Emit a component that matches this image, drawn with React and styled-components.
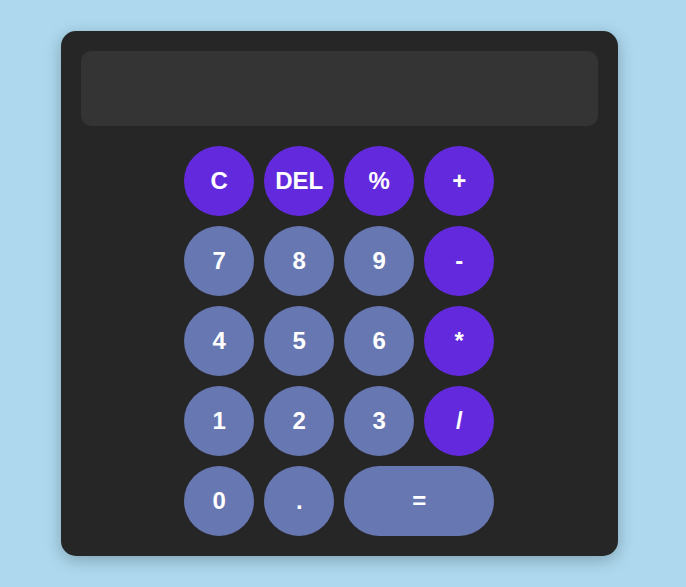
import React from 'react';
import styled, { createGlobalStyle } from 'styled-components';

const GlobalStyle = createGlobalStyle`
  html, body {
    margin: 0;
    padding: 0;
  }
  body {
    background: #add8ee;
    font-family: "Liberation Sans", Arial, sans-serif;
    min-height: 100vh;
  }
`;

const Page = styled.div`
  display: flex;
  align-items: center;
  justify-content: flex-start;
  height: 587px;
  padding-left: 61px;
  box-sizing: border-box;
`;

const Card = styled.div`
  width: 556.5px;
  box-sizing: border-box;
  background: #262626;
  border-radius: 15px;
  padding: 20px;
  box-shadow: 0 4px 16px rgba(0, 0, 0, 0.25);
`;

const Display = styled.div`
  height: 75px;
  background: #343434;
  border-radius: 10px;
  margin-bottom: 20px;
`;

const Keys = styled.div`
  display: grid;
  grid-template-columns: repeat(4, 70px);
  grid-auto-rows: 70px;
  gap: 10px;
  justify-content: center;
`;

const Key = styled.button`
  border: none;
  border-radius: 35px;
  background: ${(p) => (p.$op ? '#632add' : '#6677b2')};
  color: #fff;
  font-family: "Liberation Sans", Arial, sans-serif;
  font-weight: bold;
  font-size: 24px;
  grid-column: ${(p) => (p.$wide ? 'span 2' : 'auto')};
  cursor: pointer;
  padding: 0;
`;

const keys = [
  ['C', true], ['DEL', true], ['%', true], ['+', true],
  ['7'], ['8'], ['9'], ['-', true],
  ['4'], ['5'], ['6'], ['*', true],
  ['1'], ['2'], ['3'], ['/', true],
  ['0'], ['.'], ['=', false, true],
];

export default function App() {
  return (
    <>
      <GlobalStyle />
      <Page>
        <Card>
          <Display />
          <Keys>
            {keys.map(([label, op, wide]) => (
              <Key key={label} $op={op} $wide={wide}>
                {label}
              </Key>
            ))}
          </Keys>
        </Card>
      </Page>
    </>
  );
}
